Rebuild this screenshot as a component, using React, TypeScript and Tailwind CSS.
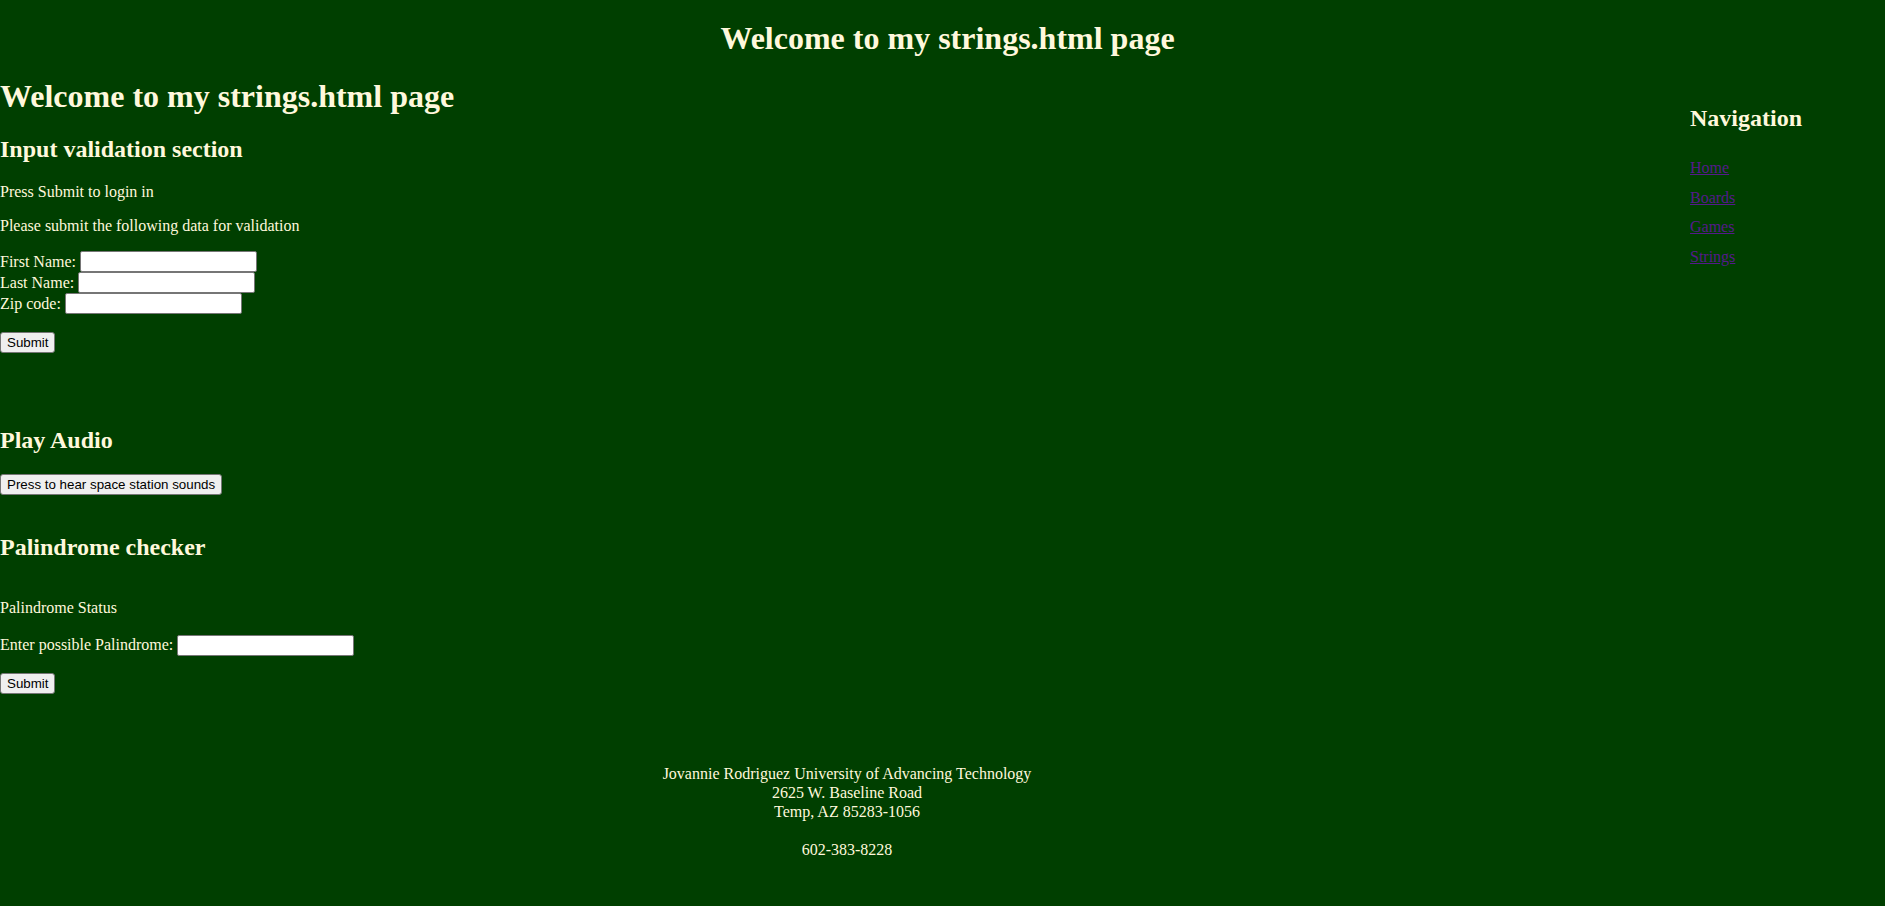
import React from "react";

const serif = "font-['Liberation_Serif','Times_New_Roman',serif]";
const btn =
  "bg-[#efefef] border border-[#767676] rounded-[3px] px-[6px] h-[21px] text-[13.333px] leading-[normal] text-black font-['Liberation_Sans',Arial,sans-serif]";
const field =
  "bg-white border border-[#767676] rounded-[2px] w-[177px] h-[21px] px-[2px] text-[13.333px] text-black font-['Liberation_Sans',Arial,sans-serif]";

const FieldRow = ({ label }: { label: string }) => (
  <div className="flex h-[21px] items-center">
    <span>{label}&nbsp;</span>
    <input type="text" className={field} />
  </div>
);

export default function App() {
  const links = ["Home", "Boards", "Games", "Strings"];

  return (
    <div
      className={`min-h-screen bg-[#003f00] text-[#fff8dc] text-[16px] leading-[normal] ${serif}`}
    >
      <header className="pt-[20px] pl-[10px] text-center">
        <h1 className="text-[32px] font-bold leading-[normal]">
          Welcome to my strings.html page
        </h1>
      </header>

      <div className="flex">
        <main className="w-[1690px] flex-none">
          <h1 className="mt-[21px] text-[32px] font-bold leading-[normal]">
            Welcome to my strings.html page
          </h1>

          <h2 className="mt-[21px] text-[24px] font-bold leading-[normal]">
            Input validation section
          </h2>
          <p className="mt-[20px]">Press Submit to login in</p>
          <p className="mt-[16px]">Please submit the following data for validation</p>

          <form className="mt-[16px]" onSubmit={(e) => e.preventDefault()}>
            <FieldRow label="First Name:" />
            <FieldRow label="Last Name:" />
            <FieldRow label="Zip code:" />
            <button type="submit" className={`${btn} mt-[18px] block`}>
              Submit
            </button>
          </form>

          <h2 className="mt-[74px] text-[24px] font-bold leading-[normal]">Play Audio</h2>
          <button type="button" className={`${btn} mt-[20px] block`}>
            Press to hear space station sounds
          </button>

          <h2 className="mt-[38.5px] text-[24px] font-bold leading-[normal]">
            Palindrome checker
          </h2>
          <p className="mt-[38px]">Palindrome Status</p>
          <div className="mt-[18px]">
            <FieldRow label="Enter possible Palindrome:" />
          </div>
          <button type="button" className={`${btn} mt-[17.5px] block`}>
            Submit
          </button>
        </main>

        <aside className="pt-[48px]">
          <h2 className="text-[24px] font-bold leading-[normal]">Navigation</h2>
          <ul className="mt-[27px] flex flex-col gap-[11.6px]">
            {links.map((l) => (
              <li key={l}>
                <a href="#" className="text-[#551a8b] underline">
                  {l}
                </a>
              </li>
            ))}
          </ul>
        </aside>
      </div>

      <footer className="mt-[70px] w-[1694px] pb-[30px] text-center leading-[19px]">
        Jovannie Rodriguez University of Advancing Technology
        <br />
        2625 W. Baseline Road
        <br />
        Temp, AZ 85283-1056
        <br />
        <br />
        602-383-8228
      </footer>
    </div>
  );
}
